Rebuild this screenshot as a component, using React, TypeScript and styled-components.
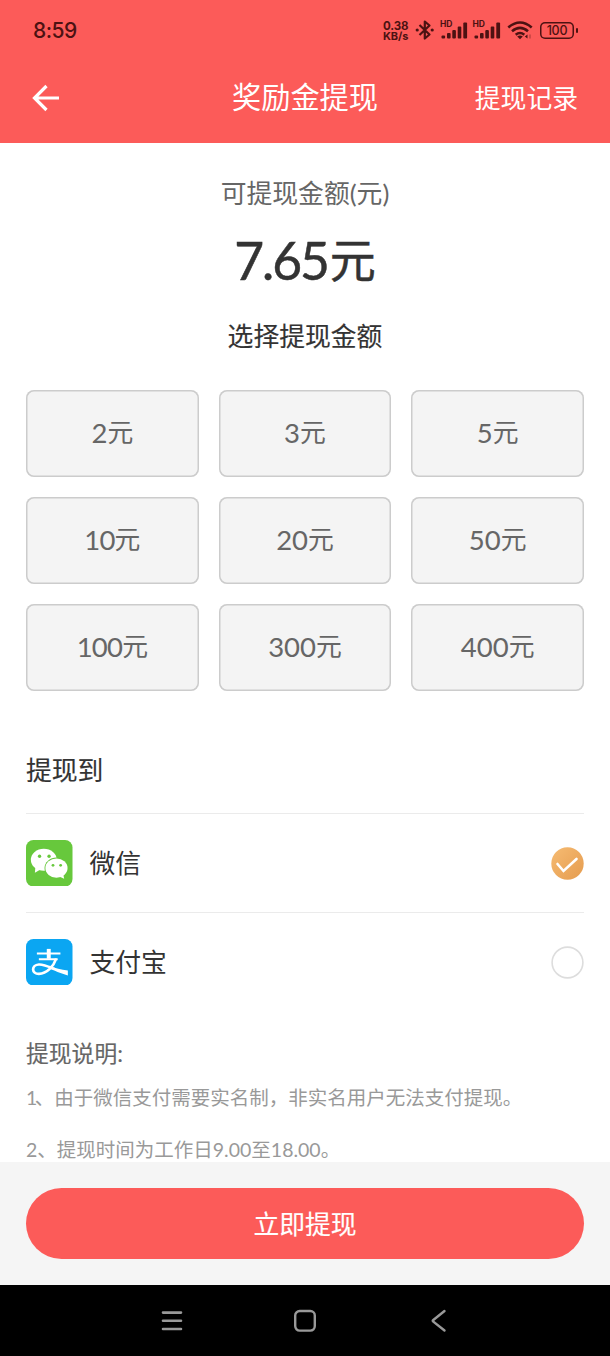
import React from 'react';
import styled, { createGlobalStyle } from 'styled-components';

const Global = createGlobalStyle`
  * { box-sizing: border-box; }
  body { margin: 0; background: #fff; font-family: Lato, "Noto Sans CJK SC", sans-serif; }
  button { font: inherit; border: 0; padding: 0; margin: 0; background: none; }
`;

const Screen = styled.div`
  width: 610px;
  height: 1356px;
  display: flex;
  flex-direction: column;
  overflow: hidden;
  background: #fff;
`;

const StatusBar = styled.div`
  height: 60px;
  flex: none;
  display: flex;
  align-items: center;
  justify-content: space-between;
  padding: 0 31px 0 33px;
  background: #fc5b59;
  color: #4c1212;
`;

const Clock = styled.span`
  padding-top: 1px;
  font: 500 21px/30px Inter, sans-serif;
  letter-spacing: -0.5px;
`;

const StatusIcons = styled.div`
  display: flex;
  align-items: center;
`;

const Speed = styled.div`
  width: 32px;
  display: flex;
  flex-direction: column;
  padding-top: 1px;
  font: 700 11.5px/10px Inter, sans-serif;
  letter-spacing: -0.1px;
  white-space: nowrap;
`;

const SpeedUnit = styled.span`
  font-size: 11px;
`;

const BluetoothIcon = styled.svg`
  margin-right: 5px;
`;

const WifiIcon = styled.svg`
  margin: 0 7px 0 2px;
`;

const Signal = styled.div`
  position: relative;
  width: 28px;
  height: 20px;
  margin-right: 4.5px;
`;

const Hd = styled.span`
  position: absolute;
  left: 0;
  top: 0;
  font: 700 8.5px/8px Inter, sans-serif;
`;

const Battery = styled.div`
  position: relative;
  width: 34px;
  height: 17px;
  box-shadow: inset 0 0 0 1.5px #4c1212;
  border-radius: 5px;
  text-align: center;
  font: 500 12.5px/17px Inter, sans-serif;
  letter-spacing: -0.2px;
  margin-right: 5px;
  &::after {
    content: "";
    position: absolute;
    right: -4px;
    top: 6px;
    width: 2.5px;
    height: 5px;
    border-radius: 1px;
    background: #4c1212;
  }
`;

const NavBar = styled.header`
  height: 83px;
  flex: none;
  display: grid;
  grid-template-columns: 1fr auto 1fr;
  align-items: center;
  padding: 0 32px 8px 32px;
  background: #fc5b59;
  color: #fff;
`;

const Title = styled.h1`
  margin: 0;
  padding-bottom: 1px;
  font-size: 29.2px;
  line-height: 40px;
  font-weight: 400;
`;

const Records = styled.button`
  justify-self: end;
  color: #fff;
  font-size: 25.8px;
  line-height: 36px;
`;

const Content = styled.main`
  flex: 1;
  min-height: 0;
  overflow: hidden;
  padding: 32px 26px 0;
`;

const Caption = styled.div`
  text-align: center;
  font-size: 25.8px;
  line-height: 36px;
  color: #666;
`;

const Balance = styled.div`
  margin-top: 14px;
  height: 70px;
  line-height: 70px;
  text-align: center;
  font-size: 46px;
  color: #333;
  -webkit-text-stroke: 0.5px #333;
`;

const BalanceDigits = styled.span`
  font-size: 51.5px;
  letter-spacing: -2.1px;
  margin-right: 2px;
`;

const Yuan = styled.span<{ $lift: number }>`
  line-height: 1;
  vertical-align: ${(p) => p.$lift}px;
`;

const Choose = styled.div`
  margin-top: 23px;
  text-align: center;
  font-size: 25.8px;
  line-height: 36px;
  color: #333;
  -webkit-text-stroke: 0.15px #333;
`;

const Grid = styled.div`
  display: grid;
  grid-template-columns: repeat(3, 1fr);
  grid-auto-rows: 87px;
  gap: 20px;
  margin-top: 36px;
`;

const Amount = styled.button`
  box-shadow: inset 0 0 0 1.5px #ccc;
  border-radius: 8px;
  background: #f4f4f4;
  color: #666;
  font-size: 25.8px;
  line-height: 36px;
  padding-bottom: 1px;
`;

const Digits = styled.span<{ $narrow?: boolean }>`
  font-size: 27.5px;
  letter-spacing: ${(p) => (p.$narrow ? '-0.8px' : '0')};
`;

const SectionTitle = styled.h2`
  margin: 61px 0 0;
  height: 61px;
  font-size: 25.8px;
  line-height: 36px;
  font-weight: 400;
  color: #333;
  -webkit-text-stroke: 0.15px #333;
`;

const Method = styled.div`
  height: 99px;
  display: flex;
  align-items: center;
  border-top: 1px solid #ebebeb;
  color: #333;
  font-size: 25.8px;
`;

const MethodName = styled.span`
  flex: 1;
  margin-left: 17px;
  line-height: 36px;
`;

const NotesTitle = styled.div`
  margin-top: 25px;
  font-size: 22.8px;
  line-height: 34px;
  color: #666;
  -webkit-text-stroke: 0.15px #666;
`;

const Note = styled.p`
  margin: 0;
  padding: 14px 0 10px;
  font-size: 19.5px;
  line-height: 28px;
  color: #999;
  white-space: nowrap;
`;

const NoteIndex = styled.span`
  letter-spacing: -2.5px;
`;

const Footer = styled.footer`
  flex: none;
  height: 123px;
  padding: 25.5px 26px 0;
  background: #f5f5f5;
`;

const Submit = styled.button`
  display: block;
  width: 100%;
  height: 71.5px;
  padding-bottom: 2px;
  border-radius: 36px;
  background: #fc5b59;
  color: #fff;
  font-size: 25.8px;
  -webkit-text-stroke: 0.15px #fff;
`;

const SystemNav = styled.nav`
  flex: none;
  height: 71px;
  display: flex;
  justify-content: center;
  align-items: center;
  gap: 109px;
  background: #000;
`;

const Bluetooth = () => (
  <BluetoothIcon width="20" height="22" viewBox="0 0 20 22" fill="none" stroke="#4c1212" strokeWidth="2.2">
    <path d="M4.5 6 14.5 15.5 9.8 19.5V2.5L14.5 6.5 4.5 16" strokeLinejoin="round" />
    <circle cx="2.2" cy="11" r="1.6" fill="#4c1212" stroke="none" />
    <circle cx="17.2" cy="11" r="1.6" fill="#4c1212" stroke="none" />
  </BluetoothIcon>
);

const SignalBars = () => (
  <Signal>
    <Hd>HD</Hd>
    <svg width="28" height="20" viewBox="0 0 28 20" fill="#4c1212">
      <rect x="1.5" y="15.5" width="3.6" height="3" rx="1" />
      <rect x="7" y="13" width="3.6" height="5.5" rx="1" />
      <rect x="12.3" y="10" width="3.6" height="8.5" rx="1" />
      <rect x="17.7" y="6.5" width="3.6" height="12" rx="1" />
      <rect x="23.3" y="2.5" width="3.8" height="16" rx="1" />
    </svg>
  </Signal>
);

const Wifi = () => (
  <WifiIcon width="26" height="20" viewBox="0 0 26 20" fill="none" stroke="#4c1212" strokeWidth="2.6">
    <path d="M1.3 7.5Q13-2.5 24.7 7.5M5 11.3Q13 4.5 21 11.3M8.7 14.8Q13 11.2 17.3 14.8" />
    <path d="M10.2 16.5Q13 14.5 15.8 16.5L13 19.2Z" fill="#4c1212" stroke="none" />
    <path d="M20.5 14.5V18.5L17.8 16.5" fill="#4c1212" stroke="none" />
    <path d="M23 14.5V18.5" strokeWidth="1" opacity=".5" />
  </WifiIcon>
);

const WeChat = () => (
  <svg width="46.5" height="46.5" viewBox="0 0 47 47">
    <rect width="47" height="47" rx="7.5" fill="#67c83c" />
    <path d="M9.5 27 9 33 15 29.5Z" fill="#fff" />
    <ellipse cx="18" cy="20" rx="13.1" ry="11.2" fill="#fff" />
    <ellipse cx="30.8" cy="28.4" rx="12.1" ry="10.6" fill="#67c83c" />
    <ellipse cx="30.8" cy="28.4" rx="11.2" ry="9.7" fill="#fff" />
    <path d="M33.5 37 38.6 39.2 37.6 34.5Z" fill="#fff" />
    <g fill="#67c83c">
      <circle cx="13.7" cy="16.4" r="1.7" />
      <circle cx="23.3" cy="16.4" r="1.7" />
      <circle cx="27.3" cy="25.6" r="1.4" />
      <circle cx="35" cy="25.6" r="1.4" />
    </g>
  </svg>
);

const Alipay = () => (
  <svg width="46.5" height="46.5" viewBox="0 0 47 47">
    <rect width="47" height="47" rx="7.5" fill="#0ba6f2" />
    <g fill="none" stroke="#fff">
      <path d="M11 14.6H34.8M13 20.4H32" strokeWidth="2" />
      <path d="M23 10V20" strokeWidth="4" />
      <path d="M30.5 19.8C28 27.5 21 35 13 35.2 5.500 35.2 5 26.5 13 25.8 18 25.5 23 28 29 30.5" strokeWidth="2.7" />
    </g>
    <path d="M24 27Q32 30.8 42.3 31.8V37Q32 34 24 29.5Z" fill="#fff" />
  </svg>
);

const Checked = () => (
  <svg width="33" height="33" viewBox="0 0 33 33">
    <defs>
      <linearGradient id="gold" x1="0" y1="0" x2="1" y2="1">
        <stop offset="0" stopColor="#f6bb72" />
        <stop offset="1" stopColor="#e59c4f" />
      </linearGradient>
    </defs>
    <circle cx="16.5" cy="16.5" r="16.2" fill="url(#gold)" />
    <path d="M6.5 17 12.5 24 25.5 12" fill="none" stroke="#fff" strokeWidth="2.6" strokeLinecap="round" />
  </svg>
);

const Unchecked = () => (
  <svg width="33" height="33" viewBox="0 0 33 33">
    <circle cx="16.5" cy="16.5" r="15.4" fill="#fff" stroke="#ddd" strokeWidth="1.6" />
  </svg>
);

const amounts = [2, 3, 5, 10, 20, 50, 100, 300, 400];

export default function App() {
  return (
    <Screen>
      <Global />
      <StatusBar>
        <Clock>8:59</Clock>
        <StatusIcons>
          <Speed><span>0.38</span><SpeedUnit>KB/s</SpeedUnit></Speed>
          <Bluetooth />
          <SignalBars />
          <SignalBars />
          <Wifi />
          <Battery>100</Battery>
        </StatusIcons>
      </StatusBar>
      <NavBar>
        <svg width="28" height="28" viewBox="0 0 28 28" fill="none" stroke="#fff" strokeWidth="3.2">
          <path d="M27 14H3M14.5 2 2.5 14 14.5 26" />
        </svg>
        <Title>奖励金提现</Title>
        <Records>提现记录</Records>
      </NavBar>
      <Content>
        <Caption>可提现金额(元)</Caption>
        <Balance><BalanceDigits>7.65</BalanceDigits><Yuan $lift={3}>元</Yuan></Balance>
        <Choose>选择提现金额</Choose>
        <Grid>
          {amounts.map((n) => (
            <Amount key={n}>
              <Digits $narrow={String(n).startsWith('1')}>{n}</Digits><Yuan $lift={1}>元</Yuan>
            </Amount>
          ))}
        </Grid>
        <SectionTitle>提现到</SectionTitle>
        <Method><WeChat /><MethodName>微信</MethodName><Checked /></Method>
        <Method><Alipay /><MethodName>支付宝</MethodName><Unchecked /></Method>
        <NotesTitle>提现说明:</NotesTitle>
        <Note><NoteIndex>1</NoteIndex>、由于微信支付需要实名制，非实名用户无法支付提现。</Note>
        <Note>2、提现时间为工作日9.00至18.00。</Note>
      </Content>
      <Footer><Submit>立即提现</Submit></Footer>
      <SystemNav>
        <svg width="24" height="24" viewBox="0 0 24 24" stroke="#999" strokeWidth="2.6" strokeLinecap="round">
          <path d="M3 3.6H21M3 11.8H21M3 20H21" />
        </svg>
        <svg width="24" height="24" viewBox="0 0 24 24" fill="none" stroke="#999" strokeWidth="2.4">
          <rect x="2.2" y="2" width="19.6" height="19.6" rx="4.5" />
        </svg>
        <svg width="24" height="24" viewBox="0 0 24 24" fill="none" stroke="#999" strokeWidth="2.4" strokeLinecap="round" strokeLinejoin="round">
          <path d="M18.5 2 7 11.3Q6.4 11.8 7 12.3L18.5 21.5" />
        </svg>
      </SystemNav>
    </Screen>
  );
}
